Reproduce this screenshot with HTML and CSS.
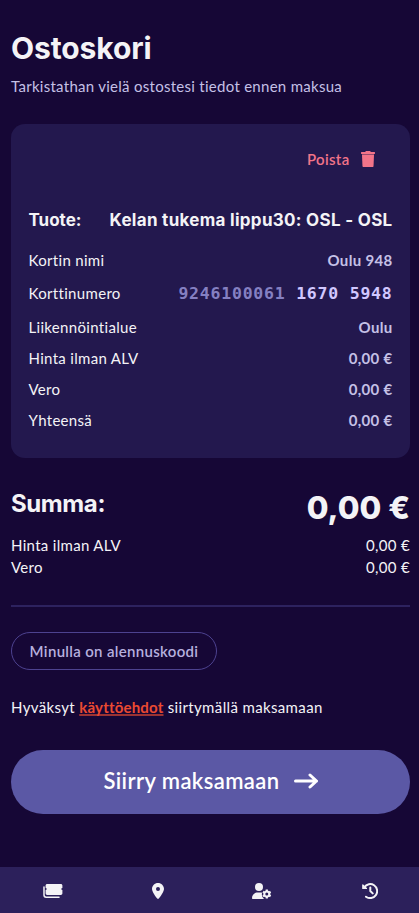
FILE: index.html
```html
<!DOCTYPE html>
<html lang="fi">
<head>
    <meta charset="UTF-8">
    <meta name="viewport" content="width=device-width, initial-scale=1.0">
    <title>Ostoskori</title>
    <link rel="stylesheet" href="styles.css">
</head>
<body>
    <main class="cart">
        <h1>Ostoskori</h1>
        <p class="intro">Tarkistathan vielä ostostesi tiedot ennen maksua</p>

        <section class="product">
            <button class="remove" type="button">
                <span>Poista</span>
                <svg width="14" height="16" viewBox="0 0 448 512" fill="currentColor"><path d="M432 32H312l-9-19C299 5 291 0 282 0H166c-9 0-17 5-21 13l-9 19H16C7 32 0 39 0 48v32c0 9 7 16 16 16h416c9 0 16-7 16-16V48c0-9-7-16-16-16z"/><path opacity=".55" d="M32 96h384v32H32z"/><path d="M32 128h384l-15 352c-1 18-14 32-32 32H79c-18 0-31-14-32-32z"/></svg>
            </button>
            <div class="row product-name"><span>Tuote:</span><strong>Kelan tukema lippu30: OSL - OSL</strong></div>
            <div class="row"><span>Kortin nimi</span><strong>Oulu 948</strong></div>
            <div class="row card-row"><span>Korttinumero</span><strong class="card-number"><span class="prefix">9246100061</span> 1670 5948</strong></div>
            <div class="row"><span>Liikennöintialue</span><strong>Oulu</strong></div>
            <div class="row"><span>Hinta ilman ALV</span><strong>0,00 €</strong></div>
            <div class="row"><span>Vero</span><strong>0,00 €</strong></div>
            <div class="row"><span>Yhteensä</span><strong>0,00 €</strong></div>
        </section>

        <section class="summary">
            <div class="total"><h2>Summa:</h2><strong>0,00 €</strong></div>
            <div class="summary-row"><span>Hinta ilman ALV</span><span>0,00 €</span></div>
            <div class="summary-row"><span>Vero</span><span>0,00 €</span></div>
        </section>

        <button class="discount" type="button">Minulla on alennuskoodi</button>
        <p class="terms">Hyväksyt <a href="#">käyttöehdot</a> siirtymällä maksamaan</p>
        <button class="pay" type="button">
            <span>Siirry maksamaan</span>
            <svg width="24" height="18" viewBox="0 0 24 18" fill="none" stroke="currentColor" stroke-width="3" stroke-linecap="round" stroke-linejoin="round"><path d="M1.500 9h21M16 3l6.5 6-6.5 6"/></svg>
        </button>
    </main>

    <nav class="tabs">
        <a href="#" aria-label="Liput">
            <svg width="20" height="16" viewBox="0 0 20 16"><path fill="currentColor" d="M4.2 1h13.6c.9 0 1.6.7 1.6 1.6v2.300a1.100 1.100 0 0 0 0 2.200v3.200c0 .9-.7 1.6-1.6 1.6H4.2c-.9 0-1.6-.7-1.6-1.6V7.100a1.100 1.100 0 0 0 0-2.200V2.600C2.600 1.700 3.300 1 4.200 1z"/><path d="M1 4v8c0 1.400.8 2.200 2.200 2.200H16" fill="none" stroke="currentColor" stroke-width="1.500" stroke-linecap="round"/></svg>
        </a>
        <a href="#" aria-label="Pysäkit">
            <svg width="12" height="16" viewBox="0 0 384 512" fill="currentColor"><path d="M216 499C267 435 384 279 384 192 384 86 298 0 192 0S0 86 0 192c0 87 117 243 168 307 12 15 36 15 48 0zM192 128a64 64 0 1 1 0 128 64 64 0 1 1 0-128z"/></svg>
        </a>
        <a href="#" aria-label="Omat tiedot">
            <svg width="20" height="16" viewBox="0 0 20 16"><g fill="currentColor"><circle cx="7" cy="4" r="4"/><path d="M1 16c-.6 0-1-.4-1-1 0-3.100 2.500-5.600 5.600-5.600h2.800c.6 0 1.200.1 1.700.3-.7 2.400.1 4.900 2.300 6.300z"/></g><circle cx="14.800" cy="11" r="2.500" fill="none" stroke="currentColor" stroke-width="2"/><path d="M14.800 7.900v-1.300M14.800 15.400v-1.300M12.100 9.450l-1.100-.65M18.600 13.200l-1.100-.65M12.100 12.550l-1.100.65M18.600 8.800l-1.100.65" stroke="currentColor" stroke-width="2.200"/></svg>
        </a>
        <a class="history" href="#" aria-label="Historia">
            <svg width="16" height="16" viewBox="0 0 16 16" fill="none" stroke="currentColor" stroke-width="2" stroke-linecap="round" stroke-linejoin="round"><path d="M2.300 4.200A7 7 0 1 1 4 13.700M8.300 4.500V8l2.400 2.400"/><path d="M.8 1.800v3.700h3.700z" fill="currentColor" stroke-width="1.200"/></svg>
        </a>
    </nav>
</body>
</html>
```

FILE: styles.css
```css
* {
    box-sizing: border-box;
}
body {
    margin: 0;
    min-height: 100vh;
    display: flex;
    flex-direction: column;
    background-color: #160736;
    color: #f4f3f6;
    font-family: Lato, "Open Sans", sans-serif;
    font-size: 15px;
    line-height: 22px;
    letter-spacing: 0.32px;
}
h1, h2, p {
    margin: 0;
}
button {
    font: inherit;
    letter-spacing: inherit;
    border: 0;
    background: none;
}
svg {
    flex: none;
}
.cart {
    flex: 1;
    padding: 27px 9px 0 11px;
}
h1, h2, .product-name, .total {
    font-family: Inter, sans-serif;
    font-weight: 700;
    letter-spacing: 0;
}
h1 {
    font-size: 30px;
    line-height: 42px;
    letter-spacing: -0.1px;
}
.intro {
    margin-top: 6px;
    color: #c5c0e6;
    letter-spacing: 0.28px;
}
.product {
    height: 334px;
    margin-top: 27px;
    padding: 24px 17.5px 0;
    border-radius: 14px;
    background-color: #23184e;
}
.remove {
    display: flex;
    align-items: center;
    gap: 11px;
    margin: 0 18px 39px auto;
    padding: 0;
    color: #f27489;
    font-weight: 600;
}
.row {
    display: flex;
    justify-content: space-between;
    align-items: center;
    height: 31px;
}
.row strong {
    color: #c5c0e6;
    font-weight: 700;
}
.product-name {
    height: 22px;
    margin-bottom: 13px;
    font-size: 17px;
}
.product-name strong {
    color: #f4f3f6;
    letter-spacing: 0.3px;
}
.card-row {
    height: 36px;
}
.row .card-number {
    padding-top: 2px;
    color: #d1c7ff;
    font-family: "DejaVu Sans Mono", monospace;
    font-size: 16.5px;
    letter-spacing: 0.77px;
}
.row .prefix {
    color: #8580c2;
}
.summary {
    padding: 28px 0 27px;
    border-bottom: 2px solid #2d225f;
}
.total, .summary-row {
    display: flex;
    justify-content: space-between;
}
.total {
    align-items: center;
    height: 48px;
}
h2 {
    margin-top: -12px;
    font-size: 24px;
    letter-spacing: -0.4px;
}
.total strong {
    margin-top: -5px;
    font-size: 31.5px;
    font-weight: 800;
}
.discount {
    display: block;
    width: 206px;
    height: 38px;
    margin-top: 25px;
    padding: 0;
    border: 1px solid #4d4290;
    border-radius: 19px;
    color: #b6b0de;
    font-weight: 600;
}
.terms {
    margin-top: 26px;
    letter-spacing: 0.36px;
}
.terms a {
    color: #eb4a31;
    font-weight: 700;
    letter-spacing: 0.2px;
    text-decoration-thickness: 2px;
    text-underline-offset: 1px;
    text-decoration-color: #9b3333;
    text-decoration-skip-ink: none;
}
.pay {
    display: flex;
    align-items: center;
    justify-content: center;
    gap: 14px;
    width: 100%;
    height: 64px;
    margin-top: 32px;
    padding-bottom: 4px;
    border-radius: 32px;
    background-color: #5b58a5;
    color: #fff;
    font-size: 22px;
    font-weight: 600;
    letter-spacing: 0.4px;
}
.tabs {
    display: grid;
    grid-template-columns: repeat(4, 1fr);
    height: 46px;
    background-color: #2c205b;
}
.tabs a {
    display: flex;
    align-items: center;
    justify-content: center;
    padding: 2px 0 0 1px;
    color: #f4f3f6;
}
.tabs .history {
    padding-left: 6px;
}
```
